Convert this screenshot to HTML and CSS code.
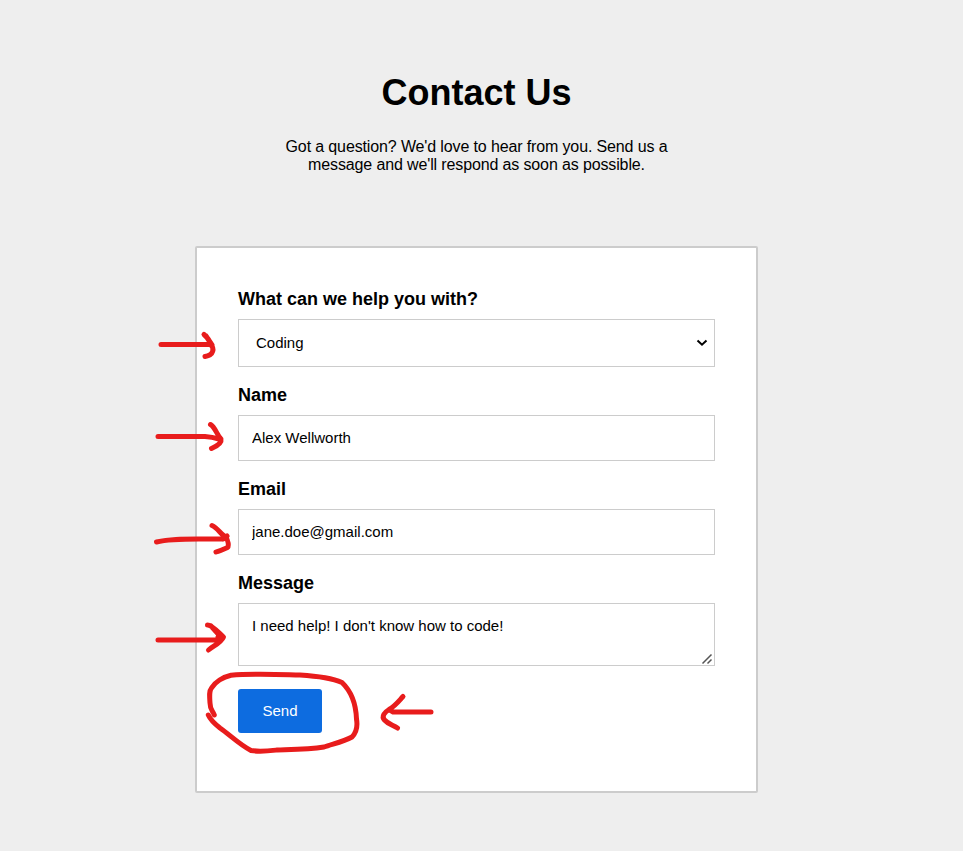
FILE: index.html
```html
<!DOCTYPE html>
<html lang="en">
<head>
<meta charset="utf-8">
<title>Contact Us</title>
<link rel="stylesheet" href="styles.css">
</head>
<body>
<main class="page">
  <header class="intro">
    <h1 class="title">Contact Us</h1>
    <p class="lead">Got a question? We'd love to hear from you. Send us a<br>message and we'll respond as soon as possible.</p>
  </header>
  <form class="card">
    <label class="label" for="topic">What can we help you with?</label>
    <div class="select-wrap">
      <select class="field select" id="topic"><option>Coding</option></select>
      <svg class="chevron" width="12" height="8" viewBox="0 0 12 8"><path d="M1.5 1.5L6 5.7L10.500 1.500"/></svg>
    </div>
    <label class="label" for="name">Name</label>
    <input class="field" id="name" type="text" value="Alex Wellworth">
    <label class="label" for="email">Email</label>
    <input class="field" id="email" type="text" value="jane.doe@gmail.com">
    <label class="label" for="message">Message</label>
    <div class="message-wrap">
      <textarea class="field message" id="message" spellcheck="false">I need help! I don't know how to code!</textarea>
      <svg class="grip" width="12" height="12" viewBox="0 0 12 12"><path d="M1.500 10.500L10.500 1.500M6.500 10.500L10.500 6.500"/></svg>
    </div>
    <button class="send" type="button">Send</button>
  </form>
</main>
<svg class="marks" width="963" height="851" viewBox="0 0 963 851" aria-hidden="true">
  <path d="M161 344.500H210M204 334.500C208 338 210 341 211 345C214 348 214.500 355 205 356.500M206 336L212 345"/>
  <path d="M158 436.500L205 436.500Q212 437 219 439M210.500 424.500C215 427 217 435 221 439C222 443 217 446 211.500 448.500"/>
  <path d="M156.500 542C174 538 190 539.500 223 539M212 525.500C218 528 221 535 226 537C228 541 229 544 228 547C226 549 221 550 216 552M223 539L227 536"/>
  <path d="M158 640H217Q222 640 222.500 637Q221 634 218 637M207.500 625C212 625 218 632 223.500 637C221 643 213 646 208.500 650M211 626L220 636"/>
  <path d="M214.300 715C213 711 210 710 210 703C209.500 696 209 691 211.500 688C215 682 223 677 231 675.200C253 673.500 277 674.500 300 675C316 676 334 679 342 682.500C352 692 356 706 356.500 719C358 728 356 733 352 737C343 742 332 744 324 747C309 749.500 293 749.500 277 750C268 751 260 752 251 750.500C240 745 230 735 220 728Q211 721 208.300 715"/>
  <path d="M431 712H393Q391 711 389.500 710M403 696.500C398 702 395 706 389 709.500C385 712 381 716 384.500 720C388 724 393 725 397.500 728"/>
</svg>
</body>
</html>
```
FILE: styles.css
```css
* { box-sizing: border-box; }
body {
  margin: 0;
  height: 851px;
  overflow: hidden;
  background: #eee;
  color: #000;
  font-family: "Liberation Sans", Arial, sans-serif;
}
.page {
  display: flex;
  flex-direction: column;
  align-items: center;
  width: 953px;
}
.intro { height: 246px; padding-top: 72px; text-align: center; }
.title { margin: 0; font-size: 36px; line-height: 42px; }
.lead { margin: 24px 0 0; font-size: 16px; line-height: 18px; letter-spacing: -0.13px; }
.card {
  display: flex;
  flex-direction: column;
  width: 563px;
  height: 547px;
  padding: 40px 41px;
  background: #fff;
  border: 2px solid #ccc;
  border-radius: 2px;
}
.label { height: 31px; font-size: 18px; font-weight: bold; line-height: 22px; }
.field {
  display: block;
  width: 477px;
  height: 46px;
  margin: 0 0 17px;
  padding: 0 13px 2px;
  border: 1px solid #ccc;
  border-radius: 0;
  outline: 0;
  background: #fff;
  color: #000;
  font: 15px "Liberation Sans", Arial, sans-serif;
}
.select-wrap, .message-wrap { position: relative; width: 477px; }
.select { height: 48px; padding: 0 17px 2px; appearance: none; }
.chevron { position: absolute; right: 7px; top: 20px; fill: none; stroke: #000; stroke-width: 2; }
.message { height: 63px; margin-bottom: 23px; padding: 13px 13px; resize: none; overflow: hidden; }
.grip { position: absolute; right: 2px; top: 50px; fill: none; stroke: #555; stroke-width: 1.5; }
.send {
  width: 84px;
  height: 44px;
  padding: 0 0 2px;
  border: 0;
  border-radius: 3px;
  background: #0d6ce0;
  color: #fff;
  font: 15px "Liberation Sans", Arial, sans-serif;
}
.marks {
  position: absolute;
  left: 0;
  top: 0;
  fill: none;
  stroke: #e81c1c;
  stroke-width: 5;
  stroke-linecap: round;
  stroke-linejoin: round;
  pointer-events: none;
}
```
